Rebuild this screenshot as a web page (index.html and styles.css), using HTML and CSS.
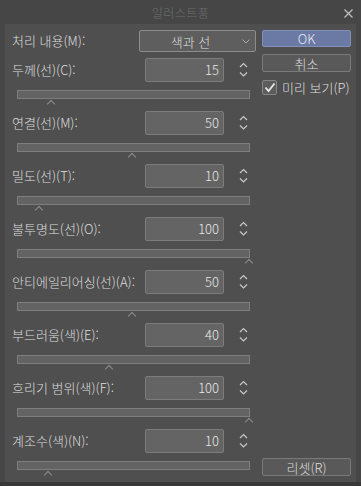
FILE: index.html
```html
<!DOCTYPE html>
<html lang="ko">
<head>
    <meta charset="UTF-8">
    <title>일러스트풍</title>
    <link rel="stylesheet" href="styles.css">
</head>
<body>
    <div class="window">
        <div class="titlebar">
            <span class="title">일러스트풍</span>
            <svg class="close" width="9" height="9" viewBox="0 0 9 9"><path d="M0.5 0.5 L8.5 8.5 M8.5 0.5 L0.5 8.5" stroke="#bdbdbd" stroke-width="1.3"/></svg>
        </div>

        <div class="panel">
            <div class="main">
                <div class="mode-row">
                    <span class="label">처리 내용(M):</span>
                    <div class="select">
                        <span>색과 선</span>
                        <svg class="select-arrow" width="8" height="5" viewBox="0 0 8 5"><path d="M0.5 0.5 L4 4 L7.5 0.5" fill="none" stroke="#aaa" stroke-width="1"/></svg>
                    </div>
                </div>

                <div class="param">
                    <div class="param-row">
                        <span class="label">두께(선)(C):</span>
                        <div class="value">15</div>
                        <svg class="spin" width="9" height="16" viewBox="0 0 9 16"><path d="M1 5 L4.5 1.5 L8 5 M1 10.5 L4.5 14 L8 10.5" fill="none" stroke="#c8c8c8" stroke-width="1.2"/></svg>
                    </div>
                    <div class="track"><span class="thumb" style="left: 14.2%"></span></div>
                </div>

                <div class="param">
                    <div class="param-row">
                        <span class="label">연결(선)(M):</span>
                        <div class="value">50</div>
                        <svg class="spin" width="9" height="16" viewBox="0 0 9 16"><path d="M1 5 L4.5 1.5 L8 5 M1 10.5 L4.5 14 L8 10.5" fill="none" stroke="#c8c8c8" stroke-width="1.2"/></svg>
                    </div>
                    <div class="track"><span class="thumb" style="left: 49.4%"></span></div>
                </div>

                <div class="param">
                    <div class="param-row">
                        <span class="label">밀도(선)(T):</span>
                        <div class="value">10</div>
                        <svg class="spin" width="9" height="16" viewBox="0 0 9 16"><path d="M1 5 L4.5 1.5 L8 5 M1 10.5 L4.5 14 L8 10.5" fill="none" stroke="#c8c8c8" stroke-width="1.2"/></svg>
                    </div>
                    <div class="track"><span class="thumb" style="left: 9%"></span></div>
                </div>

                <div class="param">
                    <div class="param-row">
                        <span class="label">불투명도(선)(O):</span>
                        <div class="value">100</div>
                        <svg class="spin" width="9" height="16" viewBox="0 0 9 16"><path d="M1 5 L4.5 1.5 L8 5 M1 10.5 L4.5 14 L8 10.5" fill="none" stroke="#c8c8c8" stroke-width="1.2"/></svg>
                    </div>
                    <div class="track"><span class="thumb" style="left: 100%"></span></div>
                </div>

                <div class="param">
                    <div class="param-row">
                        <span class="label">안티에일리어싱(선)(A):</span>
                        <div class="value">50</div>
                        <svg class="spin" width="9" height="16" viewBox="0 0 9 16"><path d="M1 5 L4.5 1.5 L8 5 M1 10.5 L4.5 14 L8 10.5" fill="none" stroke="#c8c8c8" stroke-width="1.2"/></svg>
                    </div>
                    <div class="track"><span class="thumb" style="left: 49.4%"></span></div>
                </div>

                <div class="param">
                    <div class="param-row">
                        <span class="label">부드러움(색)(E):</span>
                        <div class="value">40</div>
                        <svg class="spin" width="9" height="16" viewBox="0 0 9 16"><path d="M1 5 L4.5 1.5 L8 5 M1 10.5 L4.5 14 L8 10.5" fill="none" stroke="#c8c8c8" stroke-width="1.2"/></svg>
                    </div>
                    <div class="track"><span class="thumb" style="left: 39.5%"></span></div>
                </div>

                <div class="param">
                    <div class="param-row">
                        <span class="label">흐리기 범위(색)(F):</span>
                        <div class="value">100</div>
                        <svg class="spin" width="9" height="16" viewBox="0 0 9 16"><path d="M1 5 L4.5 1.5 L8 5 M1 10.5 L4.5 14 L8 10.5" fill="none" stroke="#c8c8c8" stroke-width="1.2"/></svg>
                    </div>
                    <div class="track"><span class="thumb" style="left: 100%"></span></div>
                </div>

                <div class="param">
                    <div class="param-row">
                        <span class="label">계조수(색)(N):</span>
                        <div class="value">10</div>
                        <svg class="spin" width="9" height="16" viewBox="0 0 9 16"><path d="M1 5 L4.5 1.5 L8 5 M1 10.5 L4.5 14 L8 10.5" fill="none" stroke="#c8c8c8" stroke-width="1.2"/></svg>
                    </div>
                    <div class="track"><span class="thumb" style="left: 12.9%"></span></div>
                </div>
            </div>

            <div class="side">
                <div class="btn btn-primary">OK</div>
                <div class="btn">취소</div>
                <label class="check">
                    <span class="check-box">
                        <svg width="12" height="11" viewBox="0 0 12 11"><path d="M1.5 5.5 L4.5 9 L10.5 1.5" fill="none" stroke="#e8e8e8" stroke-width="1.8"/></svg>
                    </span>
                    미리 보기(P)
                </label>
                <div class="btn btn-reset">리셋(R)</div>
            </div>
        </div>
        <div class="bottom-edge"></div>
    </div>
</body>
</html>
```

FILE: styles.css
```css
body {
    margin: 0;
    background-color: #3a3a3a;
    font-family: "Noto Sans CJK KR", "Noto Sans", sans-serif;
    font-size: 13px;
    font-weight: 300;
    color: #dedede;
}
.window {
    width: 361px;
    height: 486px;
    background-color: #464646;
    overflow: hidden;
}
.titlebar {
    height: 24px;
    display: flex;
    align-items: center;
    justify-content: center;
    position: relative;
}
.title {
    font-size: 12px;
    color: #6e6e6e;
    letter-spacing: 0.5px;
}
.close {
    position: absolute;
    right: 8px;
    top: 9px;
}
.panel {
    margin: 0 5px;
    height: 458px;
    box-sizing: border-box;
    padding: 6px 5px 6px 7px;
    background-color: #4f4f4f;
    display: flex;
}
.main {
    width: 245px;
}
.label {
    white-space: nowrap;
    line-height: 16px;
}
.mode-row {
    display: flex;
    align-items: center;
    height: 22px;
    margin-bottom: 6px;
}
.mode-row .label {
    width: 127px;
}
.select {
    width: 117px;
    height: 22px;
    box-sizing: border-box;
    border: 1px solid #8c8c8c;
    border-radius: 2px;
    background-color: #5e5e5e;
    display: flex;
    align-items: center;
    justify-content: center;
    padding-right: 14px;
    position: relative;
}
.select-arrow {
    position: absolute;
    right: 5px;
    top: 8px;
}
.param {
    height: 53px;
}
.param-row {
    display: flex;
    align-items: center;
    height: 24px;
}
.param-row .label {
    width: 133px;
}
.value {
    width: 79px;
    height: 24px;
    box-sizing: border-box;
    border: 1px solid #7c7c7c;
    border-radius: 2px;
    background-color: #646464;
    text-align: right;
    padding-right: 4px;
    line-height: 21px;
    color: #e8e8e8;
}
.spin {
    margin-left: 15px;
}
.track {
    margin: 8px 0 0 5px;
    width: 233px;
    height: 9px;
    box-sizing: border-box;
    border: 1px solid #7e7e7e;
    background-color: #636363;
    position: relative;
}
.thumb {
    position: absolute;
    top: 10px;
    width: 5px;
    height: 5px;
    margin-left: -3px;
    border-top: 1px solid #8e8e8e;
    border-left: 1px solid #8e8e8e;
    transform: rotate(45deg);
}
.side {
    width: 89px;
    margin-left: 5px;
    display: flex;
    flex-direction: column;
}
.btn {
    height: 18px;
    box-sizing: border-box;
    border: 1px solid #7a7a7a;
    border-radius: 2px;
    background-color: #595959;
    display: flex;
    align-items: center;
    justify-content: center;
    color: #dcdcdc;
    margin-bottom: 7px;
}
.btn-primary {
    background-color: #6a7aa5;
    border-color: #8290b8;
    color: #e6e9f2;
    height: 17px;
}
.btn-reset {
    margin-top: auto;
    margin-bottom: 0;
}
.check {
    display: flex;
    align-items: center;
    gap: 5px;
    height: 15px;
    margin-top: 1px;
    white-space: nowrap;
}
.check-box {
    width: 15px;
    height: 15px;
    box-sizing: border-box;
    border: 1px solid #858585;
    border-radius: 2px;
    background-color: #5c5c5c;
    display: flex;
    align-items: center;
    justify-content: center;
}
.bottom-edge {
    height: 4px;
    background-color: #383838;
}
```
